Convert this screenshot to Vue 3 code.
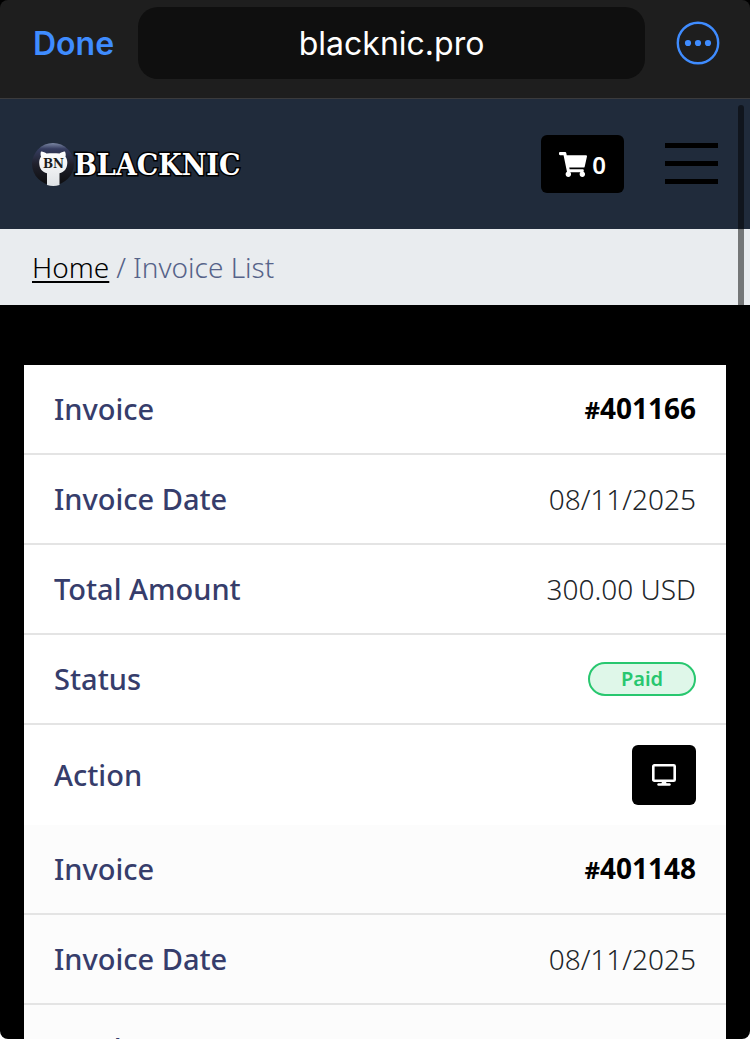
<script setup>
import { ref } from 'vue';

const address = ref('blacknic.pro');
const cartCount = ref(0);

const invoices = [
  { id: '401166', date: '08/11/2025', total: '300.00 USD', status: 'Paid' },
  { id: '401148', date: '08/11/2025', total: '300.00 USD', status: 'Paid' },
];
</script>

<template>
  <div class="sheet">
    <header class="browser-bar">
      <button type="button" class="done">Done</button>
      <input v-model="address" class="address" type="text" aria-label="Address" readonly />
      <button type="button" class="more" aria-label="More options">
        <svg viewBox="0 0 44 44" width="44" height="44" fill="none">
          <circle cx="22" cy="22" r="20.2" stroke="currentColor" stroke-width="2.4" />
          <g fill="currentColor">
            <circle cx="12" cy="22" r="3.1" />
            <circle cx="22" cy="22" r="3.1" />
            <circle cx="32" cy="22" r="3.1" />
          </g>
        </svg>
      </button>
    </header>

    <div class="page">
      <nav class="navbar">
        <a href="#" class="brand">
          <svg class="brand-mark" viewBox="0 0 42 44" width="42" height="44" aria-hidden="true">
            <defs>
              <linearGradient id="ball" x1="0" y1="0" x2="0" y2="1">
                <stop offset="0" stop-color="#7c88a4" />
                <stop offset="0.14" stop-color="#363d60" />
                <stop offset="0.5" stop-color="#20212c" />
                <stop offset="1" stop-color="#0d0d0f" />
              </linearGradient>
              <linearGradient id="cat" x1="0" y1="0" x2="0" y2="1">
                <stop offset="0" stop-color="#ffffff" />
                <stop offset="1" stop-color="#dfe2e5" />
              </linearGradient>
            </defs>
            <circle cx="21" cy="22" r="21" fill="url(#ball)" />
            <path
              d="M9 9.500c2.500.3 4 .8 5.500 2 4-.5 9-.5 13 0 1.500-1.200 3-1.700 5.500-2 .8 2 .9 3.500.5 5.200 1.300 1.800 1.900 3.800 1.800 6.300-.2 6-3.200 9-7.800 10.200V43q-6.200 1.800-12.500 0V31.200c-4.600-1.200-7.600-4.200-7.800-10.200-.1-2.500.5-4.500 1.800-6.300-.4-1.700-.7-3.200 0-5.200z"
              fill="url(#cat)"
            />
            <text x="21.500" y="26" text-anchor="middle" class="mark-text">BN</text>
          </svg>
          <span class="brand-name">BLACKNIC</span>
        </a>
        <div class="nav-actions">
          <button type="button" class="cart" aria-label="Cart">
            <svg viewBox="0 0 576 512" width="28" height="25" fill="currentColor" aria-hidden="true">
              <path
                d="M528.120 301.319l47.273-208C578.806 78.301 567.391 64 551.990 64H159.208l-9.166-44.810C147.758 8.021 137.930 0 126.529 0H24C10.745 0 0 10.745 0 24v16c0 13.255 10.745 24 24 24h69.883l70.248 343.435C147.325 417.100 136 435.222 136 456c0 30.928 25.072 56 56 56s56-25.072 56-56c0-15.674-6.447-29.835-16.824-40h209.647C430.447 426.165 424 440.326 424 456c0 30.928 25.072 56 56 56s56-25.072 56-56c0-22.172-12.888-41.332-31.579-50.405l5.517-24.276c3.413-15.018-8.002-29.319-23.403-29.319H218.117l-6.545-32h293.145c11.206 0 20.920-7.754 23.403-18.681z"
              />
            </svg>
            <span>{{ cartCount }}</span>
          </button>
          <button type="button" class="menu-toggle" aria-label="Menu">
            <span></span>
            <span></span>
            <span></span>
          </button>
        </div>
      </nav>

      <div class="breadcrumb">
        <a href="#">Home</a>
        <span>/</span>
        <span>Invoice List</span>
      </div>

      <main class="content">
        <table class="invoice-table">
          <tbody v-for="invoice in invoices" :key="invoice.id">
            <tr>
              <th scope="row">Invoice</th>
              <td><a href="#" class="invoice-id"><small>#</small>{{ invoice.id }}</a></td>
            </tr>
            <tr>
              <th scope="row">Invoice Date</th>
              <td>{{ invoice.date }}</td>
            </tr>
            <tr>
              <th scope="row">Total Amount</th>
              <td>{{ invoice.total }}</td>
            </tr>
            <tr>
              <th scope="row">Status</th>
              <td><div class="badge">{{ invoice.status }}</div></td>
            </tr>
            <tr class="action-row">
              <th scope="row">Action</th>
              <td>
                <button type="button" class="view" aria-label="View invoice">
                  <svg viewBox="0 0 24 22" width="24" height="22" fill="none" stroke="currentColor">
                    <rect x="1.300" y="1.300" width="21.400" height="15.400" rx="1" stroke-width="2.600" />
                    <path d="M6.500 20.500h11" stroke-width="2.400" stroke-linecap="round" />
                    <path d="M10 17h4l.6 3h-5.200z" fill="currentColor" stroke="none" />
                  </svg>
                </button>
              </td>
            </tr>
          </tbody>
        </table>
      </main>
    </div>
    <div class="scroll-thumb"></div>
  </div>
</template>

<style>
body {
  margin: 0;
  background: #fff;
}
</style>

<style scoped>
.sheet {
  position: relative;
  display: flex;
  flex-direction: column;
  height: 100vh;
  overflow: hidden;
  border-radius: 0 0 8px 8px;
  background: #000;
  font-family: "Noto Sans", "Open Sans", sans-serif;
}

button {
  padding: 0;
  border: 0;
  background: none;
  font-family: inherit;
  cursor: pointer;
}

svg {
  display: block;
}

.browser-bar {
  flex-shrink: 0;
  display: flex;
  align-items: center;
  gap: 24px;
  padding: 7px 30px 19px 33px;
  border-bottom: 1px solid #3b3b3d;
  border-radius: 8px 8px 0 0;
  background: #1e1e1e;
}

.done {
  color: #3f8cff;
  font-family: Inter, sans-serif;
  font-size: 32px;
  font-weight: 600;
}

.address {
  flex: 1;
  min-width: 0;
  height: 72px;
  box-sizing: border-box;
  padding: 0 16px;
  border: 0;
  border-radius: 20px;
  outline: 0;
  background: #0f0f0f;
  color: #fff;
  font-family: Inter, sans-serif;
  font-size: 32px;
  text-align: center;
}

.more {
  margin-left: 7px;
  color: #3f8cff;
}

.page {
  flex: 1;
  min-height: 0;
  overflow-y: auto;
  scrollbar-width: none;
}

.navbar {
  display: flex;
  align-items: center;
  justify-content: space-between;
  height: 130px;
  padding: 0 32px;
  background: #202b3b;
}

.brand {
  display: flex;
  align-items: center;
  color: #fff;
  text-decoration: none;
}

.mark-text {
  fill: #1c1c1c;
  font-family: "DejaVu Serif", serif;
  font-size: 12px;
  font-weight: 700;
}

.brand-name {
  padding-top: 2px;
  font-family: "DejaVu Serif Condensed", "DejaVu Serif", serif;
  font-size: 30px;
  font-weight: 700;
  line-height: 44px;
  -webkit-text-stroke: 3px #000;
  paint-order: stroke fill;
}

.nav-actions {
  display: flex;
  align-items: center;
  gap: 41px;
}

.cart {
  display: flex;
  align-items: center;
  gap: 5px;
  height: 58px;
  padding: 0 18px;
  border-radius: 6px;
  background: #000;
  color: #fff;
  font-size: 24px;
  font-weight: 600;
}

.menu-toggle {
  display: flex;
  flex-direction: column;
  gap: 13px;
  width: 53px;
  padding-bottom: 2px;
}

.menu-toggle span {
  height: 5px;
  background: #000;
}

.breadcrumb {
  display: flex;
  align-items: center;
  gap: 7px;
  height: 76px;
  padding: 0 32px;
  background: #e9ecef;
  color: #566389;
  font-size: 28px;
  font-weight: 300;
}

.breadcrumb a {
  color: #000;
  text-decoration-thickness: 2px;
  text-underline-offset: 3px;
}

.content {
  padding: 60px 24px;
}

.invoice-table {
  width: 100%;
  border-spacing: 0;
  background: #fff;
  color: #212529;
  line-height: 40px;
}

.invoice-table tbody:nth-child(even) {
  background: #fcfcfc;
}

.invoice-table th,
.invoice-table td {
  height: 88px;
  padding: 0 30px;
  border-bottom: 2px solid #e4e4e4;
}

.invoice-table th {
  color: #363d6b;
  font-size: 29px;
  font-weight: 500;
  text-align: left;
}

.invoice-table td {
  font-size: 28px;
  font-weight: 300;
  text-align: right;
}

.invoice-table .action-row th,
.invoice-table .action-row td {
  height: 100px;
  border-bottom: 0;
}

.invoice-id {
  color: #000;
  font-weight: 700;
  text-decoration: none;
}

.invoice-id small {
  font-size: 24px;
}

.badge {
  width: 108px;
  box-sizing: border-box;
  margin-left: auto;
  border: 2px solid #28c76f;
  border-radius: 17px;
  background: #dff7e9;
  color: #28c76f;
  font-size: 20px;
  font-weight: 600;
  line-height: 30px;
  text-align: center;
}

.view {
  display: inline-flex;
  align-items: center;
  justify-content: center;
  width: 64px;
  height: 60px;
  border-radius: 6px;
  background: #000;
  color: #fff;
  vertical-align: middle;
}

.scroll-thumb {
  position: absolute;
  top: 105px;
  right: 6px;
  width: 6px;
  height: 200px;
  border-radius: 3px 3px 0 0;
  background: rgba(0, 0, 0, 0.5);
}
</style>
